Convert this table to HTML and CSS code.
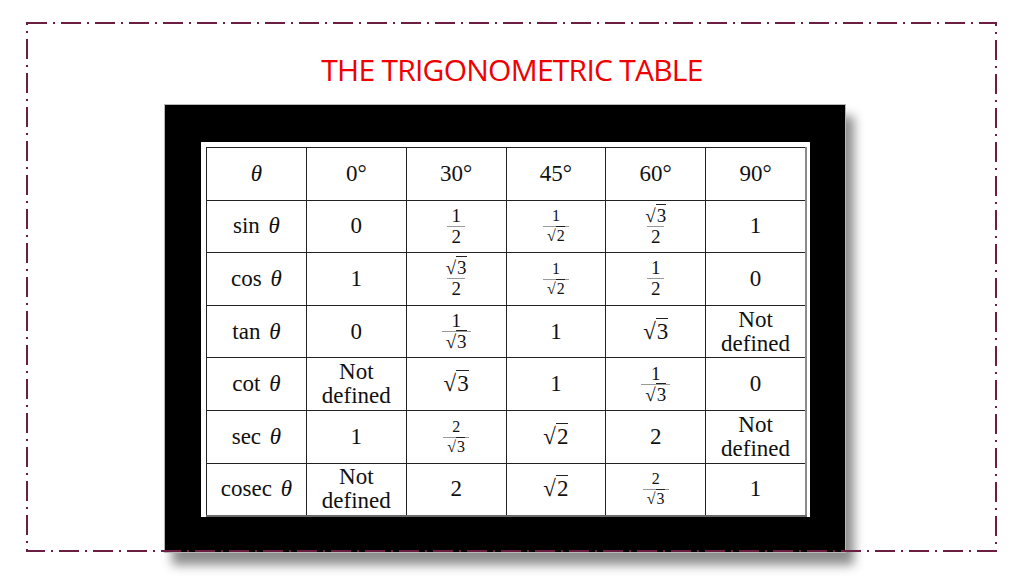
FILE: index.html
```html
<!DOCTYPE html>
<html>
<head>
<meta charset="utf-8">
<link rel="stylesheet" href="styles.css">
</head>
<body>
<div class="slide">
  <svg class="frame" width="974" height="532" viewBox="0 0 974 532">
    <rect x="1" y="1" width="969" height="528" fill="none" stroke="#6b1d42" stroke-width="2" stroke-dasharray="20 6 2 6"/>
  </svg>
  <h1 class="title">THE TRIGONOMETRIC TABLE</h1>
  <div class="picture">
    <div class="paper">
      <table class="trig">
        <tr>
          <td><i class="th0">θ</i></td><td>0°</td><td>30°</td><td>45°</td><td>60°</td><td>90°</td>
        </tr>
        <tr>
          <td>sin <i>θ</i></td>
          <td>0</td>
          <td><span class="frac"><span class="num">1</span><span class="den">2</span></span></td>
          <td><span class="frac sm"><span class="num">1</span><span class="den"><span class="sq">√<span class="rn">2</span></span></span></span></td>
          <td><span class="frac"><span class="num"><span class="sq">√<span class="rn">3</span></span></span><span class="den">2</span></span></td>
          <td>1</td>
        </tr>
        <tr>
          <td>cos <i>θ</i></td>
          <td>1</td>
          <td><span class="frac"><span class="num"><span class="sq">√<span class="rn">3</span></span></span><span class="den">2</span></span></td>
          <td><span class="frac sm"><span class="num">1</span><span class="den"><span class="sq">√<span class="rn">2</span></span></span></span></td>
          <td><span class="frac"><span class="num">1</span><span class="den">2</span></span></td>
          <td>0</td>
        </tr>
        <tr>
          <td>tan <i>θ</i></td>
          <td>0</td>
          <td><span class="frac"><span class="num">1</span><span class="den"><span class="sq">√<span class="rn">3</span></span></span></span></td>
          <td>1</td>
          <td><span class="sq big">√<span class="rn">3</span></span></td>
          <td class="two">Not<br>defined</td>
        </tr>
        <tr>
          <td>cot <i>θ</i></td>
          <td class="two">Not<br>defined</td>
          <td><span class="sq big">√<span class="rn">3</span></span></td>
          <td>1</td>
          <td><span class="frac"><span class="num">1</span><span class="den"><span class="sq">√<span class="rn">3</span></span></span></span></td>
          <td>0</td>
        </tr>
        <tr>
          <td>sec <i>θ</i></td>
          <td>1</td>
          <td><span class="frac sm"><span class="num">2</span><span class="den"><span class="sq">√<span class="rn">3</span></span></span></span></td>
          <td><span class="sq big">√<span class="rn">2</span></span></td>
          <td>2</td>
          <td class="two">Not<br>defined</td>
        </tr>
        <tr>
          <td>cosec <i>θ</i></td>
          <td class="two">Not<br>defined</td>
          <td>2</td>
          <td><span class="sq big">√<span class="rn">2</span></span></td>
          <td><span class="frac sm"><span class="num">2</span><span class="den"><span class="sq">√<span class="rn">3</span></span></span></span></td>
          <td>1</td>
        </tr>
      </table>
    </div>
  </div>
</div>
</body>
</html>
```
FILE: styles.css
```css
html, body {
  margin: 0;
  padding: 0;
  background: #ffffff;
}

.slide {
  position: relative;
  width: 1024px;
  height: 576px;
  overflow: hidden;
  background: #ffffff;
  padding-top: 50px;
  box-sizing: border-box;
}

.frame {
  position: absolute;
  left: 26px;
  top: 22px;
  z-index: 2;
}

.title {
  margin: 0;
  height: 40px;
  line-height: 40px;
  text-align: center;
  font-family: "Open Sans", "Noto Sans", sans-serif;
  font-weight: 400;
  font-size: 30px;
  letter-spacing: -0.75px;
  color: #f00000;
}

.picture {
  margin: 14px 0 0 164px;
  width: 682px;
  height: 449px;
  box-sizing: border-box;
  background: #000000;
  border: 1px solid #b8b8b8;
  padding: 37px 0 0 36px;
  box-shadow: 8px 12px 10px rgba(0, 0, 0, 0.45);
}

.paper {
  width: 609px;
  height: 375px;
  box-sizing: border-box;
  background: #ffffff;
  padding: 5px 3px 2px 5px;
}

.trig {
  border-collapse: collapse;
  font-family: "Liberation Serif", "Times New Roman", serif;
  font-size: 23px;
  color: #111111;
}

.trig td {
  width: 99px;
  height: 51.6px;
  padding: 0;
  border: 1px solid #222222;
  text-align: center;
  vertical-align: middle;
  line-height: 24px;
}

.trig tr td:last-child {
  border-right: 2px solid #8a8a8a;
}

.trig tr:last-child td {
  border-bottom: 2px solid #6a6a6a;
}

.trig i {
  font-style: italic;
  margin-left: 3px;
}

.trig i.th0 {
  margin-left: 0;
}

.trig td.two {
  line-height: 24px;
}

.frac {
  display: inline-flex;
  flex-direction: column;
  align-items: center;
  vertical-align: middle;
  font-size: 19px;
  line-height: 18px;
}

.frac .num {
  padding: 0 4px 1px;
}

.frac .den {
  padding: 1px 4px 0;
  border-top: 1px solid #9a9a9a;
}

.frac.sm {
  font-size: 16px;
  line-height: 16px;
}

.frac.sm .num {
  padding: 0 4px 2px;
}

.frac.sm .den {
  padding: 1px 4px 0;
}

.sq {
  white-space: nowrap;
}

.sq .rn {
  border-top: 1px solid #222222;
  padding-left: 1px;
}

.sq.big {
  font-size: 23px;
}
```
